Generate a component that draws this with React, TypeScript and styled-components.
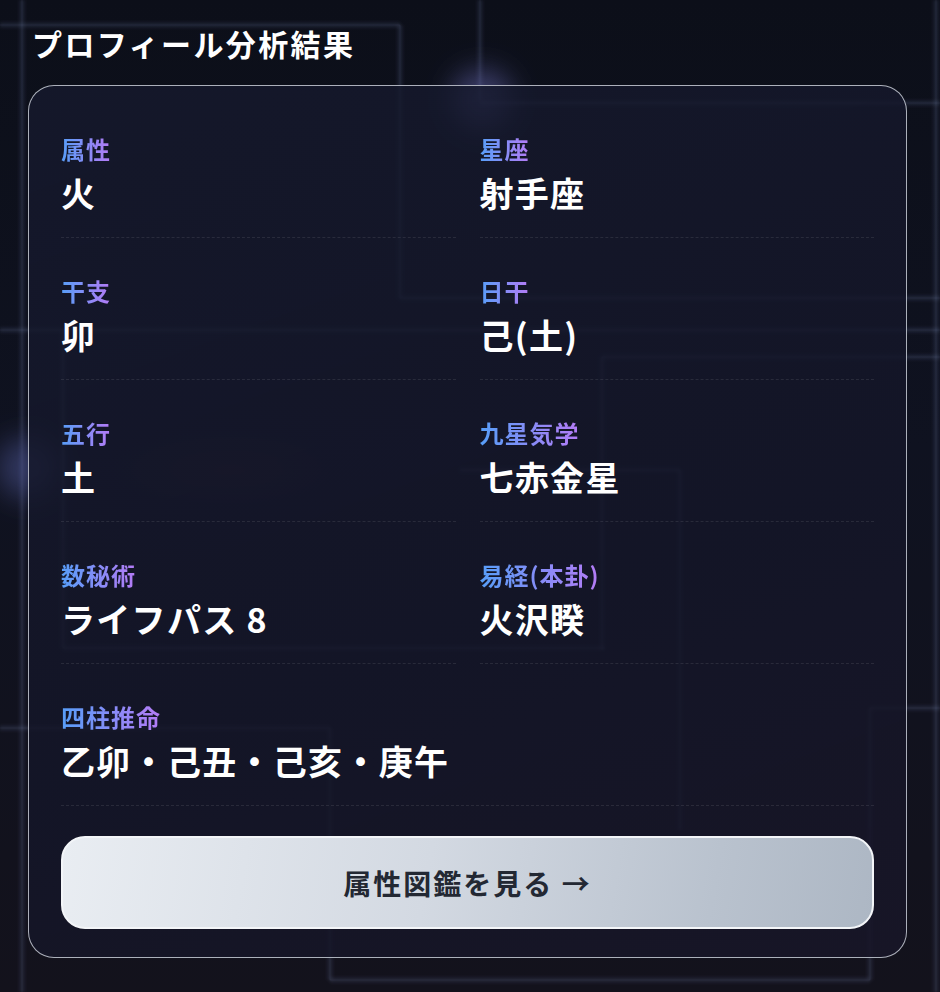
import React from "react";
import styled, { createGlobalStyle } from "styled-components";

const GlobalStyle = createGlobalStyle`
  html, body {
    margin: 0;
    padding: 0;
    background: #0d0f18;
  }
  body {
    font-family: "Noto Sans CJK JP", "Noto Sans", sans-serif;
    -webkit-font-smoothing: antialiased;
  }
  * { box-sizing: border-box; }
`;

const Page = styled.div`
  position: relative;
  min-height: 992px;
  overflow: hidden;
  padding: 23px 33px 0 28px;
  background: linear-gradient(180deg, #0c0f19 0%, #0f1220 45%, #13121c 100%);
`;

const Backdrop = styled.svg`
  position: absolute;
  inset: 0;
  width: 100%;
  height: 100%;
  pointer-events: none;
  z-index: 0;
`;

const Content = styled.main`
  position: relative;
  z-index: 1;
`;

const Title = styled.h2`
  margin: 0 0 22px;
  padding-left: 4px;
  font-size: 30px;
  line-height: 40px;
  font-weight: 700;
  letter-spacing: 2.4px;
  color: #ffffff;
`;

const Card = styled.section`
  width: 879px;
  border: 1.5px solid rgba(200, 204, 214, 0.85);
  border-radius: 26px;
  padding: 29px 32px 28px;
  background: linear-gradient(160deg, rgba(22, 26, 46, 0.82) 0%, rgba(20, 22, 40, 0.86) 60%, rgba(24, 22, 40, 0.88) 100%);
`;

const Grid = styled.div`
  display: grid;
  grid-template-columns: 1fr 1fr;
  column-gap: 24px;
  row-gap: 19px;
`;

const Cell = styled.div<{ $full?: boolean }>`
  grid-column: ${(p) => (p.$full ? "1 / -1" : "auto")};
  padding: 18px 0 22px;
  border-bottom: 1px dashed rgba(255, 255, 255, 0.09);
  display: flex;
  flex-direction: column;
  align-items: flex-start;
  gap: 6px;
`;

const Label = styled.span`
  display: inline-block;
  font-size: 24px;
  line-height: 32px;
  font-weight: 700;
  letter-spacing: 1px;
  background: linear-gradient(90deg, #579ef8 0%, #b57bf6 100%);
  -webkit-background-clip: text;
  background-clip: text;
  color: transparent;
`;

const Value = styled.span`
  font-size: 34px;
  line-height: 44px;
  font-weight: 700;
  letter-spacing: 1.3px;
  color: #ffffff;
`;

const ActionButton = styled.button`
  margin-top: 30px;
  width: 100%;
  height: 93px;
  display: flex;
  align-items: center;
  justify-content: center;
  border: 2px solid #f3f5f8;
  border-radius: 24px;
  background: linear-gradient(100deg, #e9edf2 0%, #d3d9e2 45%, #b9c2ce 80%, #adb7c4 100%);
  font-family: "Noto Sans CJK JP", "Noto Sans", sans-serif;
  font-size: 28px;
  font-weight: 700;
  letter-spacing: 2px;
  color: #232833;
  cursor: pointer;
`;

type Item = { label: string; value: string; full?: boolean };

const items: Item[] = [
  { label: "属性", value: "火" },
  { label: "星座", value: "射手座" },
  { label: "干支", value: "卯" },
  { label: "日干", value: "己(土)" },
  { label: "五行", value: "土" },
  { label: "九星気学", value: "七赤金星" },
  { label: "数秘術", value: "ライフパス 8" },
  { label: "易経(本卦)", value: "火沢睽" },
  { label: "四柱推命", value: "乙卯・己丑・己亥・庚午", full: true },
];

const lines: [number, number, number, number][] = [
  [0, 25, 400, 25],
  [400, 25, 400, 298],
  [400, 298, 940, 298],
  [480, 0, 480, 100],
  [480, 103, 940, 103],
  [22, 0, 22, 992],
  [936, 0, 936, 992],
  [0, 330, 940, 330],
  [63, 330, 63, 648],
  [602, 357, 940, 357],
  [602, 357, 602, 650],
  [63, 648, 605, 648],
  [460, 470, 680, 470],
  [680, 470, 680, 830],
  [0, 728, 330, 728],
  [330, 728, 330, 980],
  [330, 980, 870, 980],
  [870, 708, 870, 980],
  [870, 708, 940, 708],
];

export default function App() {
  return (
    <>
      <GlobalStyle />
      <Page>
        <Backdrop viewBox="0 0 940 992" preserveAspectRatio="none">
          <defs>
            <filter id="soft" x="-20%" y="-20%" width="140%" height="140%">
              <feGaussianBlur stdDeviation="1.6" />
            </filter>
            <filter id="glow" x="-100%" y="-100%" width="300%" height="300%">
              <feGaussianBlur stdDeviation="14" />
            </filter>
            <radialGradient id="warm" cx="0.5" cy="0.5" r="0.5">
              <stop offset="0" stopColor="rgba(120,40,60,0.18)" />
              <stop offset="1" stopColor="rgba(120,40,60,0)" />
            </radialGradient>
          </defs>
          <g filter="url(#soft)" stroke="rgba(120,130,175,0.16)" strokeWidth="5" fill="none">
            {lines.map(([x1, y1, x2, y2], i) => (
              <line key={i} x1={x1} y1={y1} x2={x2} y2={y2} />
            ))}
          </g>
          <g stroke="rgba(150,160,200,0.08)" strokeWidth="1" fill="none">
            {lines.map(([x1, y1, x2, y2], i) => (
              <line key={i} x1={x1} y1={y1} x2={x2} y2={y2} />
            ))}
          </g>
          <circle cx="482" cy="100" r="30" fill="rgba(110,110,190,0.5)" filter="url(#glow)" />
          <circle cx="28" cy="468" r="30" fill="rgba(100,110,190,0.4)" filter="url(#glow)" />
          <ellipse cx="230" cy="470" rx="120" ry="40" fill="url(#warm)" />
        </Backdrop>
        <Content>
          <Title>プロフィール分析結果</Title>
          <Card>
            <Grid>
              {items.map((it) => (
                <Cell key={it.label} $full={it.full}>
                  <Label>{it.label}</Label>
                  <Value>{it.value}</Value>
                </Cell>
              ))}
            </Grid>
            <ActionButton type="button">属性図鑑を見る →</ActionButton>
          </Card>
        </Content>
      </Page>
    </>
  );
}
